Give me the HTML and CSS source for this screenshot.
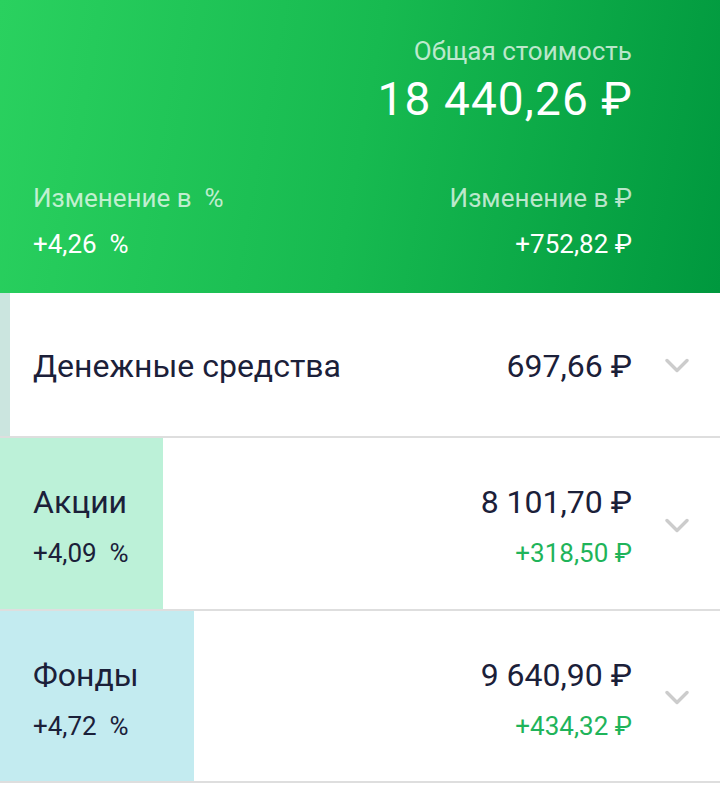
FILE: index.html
```html
<!DOCTYPE html>
<html lang="ru">
<head>
<meta charset="utf-8">
<link rel="stylesheet" href="styles.css">
</head>
<body>
<div class="page">
  <header class="summary">
    <div class="total">
      <div class="label">Общая стоимость</div>
      <div class="total-value">18 440,26 ₽</div>
    </div>
    <div class="changes">
      <div class="change">
        <div class="label">Изменение в &nbsp;%</div>
        <div class="change-value">+4,26 &nbsp;%</div>
      </div>
      <div class="change right">
        <div class="label">Изменение в ₽</div>
        <div class="change-value">+752,82 ₽</div>
      </div>
    </div>
  </header>

  <div class="row row-cash">
    <div class="bar bar-cash" style="width:10px"></div>
    <div class="row-main">
      <div class="name">Денежные средства</div>
    </div>
    <div class="row-values">
      <div class="amount">697,66 ₽</div>
    </div>
    <div class="chevron"><svg width="24" height="16" viewBox="0 0 24 16"><path d="M2 2.5 L12 12.5 L22 2.5" fill="none" stroke="#cccccc" stroke-width="3.4" stroke-linecap="round" stroke-linejoin="round"/></svg></div>
  </div>

  <div class="row row-stocks">
    <div class="bar bar-stocks" style="width:163px"></div>
    <div class="row-main">
      <div class="name">Акции</div>
      <div class="pct">+4,09 &nbsp;%</div>
    </div>
    <div class="row-values">
      <div class="amount">8 101,70 ₽</div>
      <div class="gain">+318,50 ₽</div>
    </div>
    <div class="chevron"><svg width="24" height="16" viewBox="0 0 24 16"><path d="M2 2.5 L12 12.5 L22 2.5" fill="none" stroke="#cccccc" stroke-width="3.4" stroke-linecap="round" stroke-linejoin="round"/></svg></div>
  </div>

  <div class="row row-funds">
    <div class="bar bar-funds" style="width:194px"></div>
    <div class="row-main">
      <div class="name">Фонды</div>
      <div class="pct">+4,72 &nbsp;%</div>
    </div>
    <div class="row-values">
      <div class="amount">9 640,90 ₽</div>
      <div class="gain">+434,32 ₽</div>
    </div>
    <div class="chevron"><svg width="24" height="16" viewBox="0 0 24 16"><path d="M2 2.5 L12 12.5 L22 2.5" fill="none" stroke="#cccccc" stroke-width="3.4" stroke-linecap="round" stroke-linejoin="round"/></svg></div>
  </div>
</div>
</body>
</html>
```
FILE: styles.css
```css
html, body {
  margin: 0;
  padding: 0;
  background: #ffffff;
}
body {
  font-family: Roboto, "Noto Sans", sans-serif;
}
.page {
  width: 720px;
}
.summary {
  height: 293px;
  box-sizing: border-box;
  background: linear-gradient(100deg, #2ad15f 0%, #17ba50 50%, #00983e 100%);
  padding: 36px 88px 0 33px;
  color: #ffffff;
}
.total {
  text-align: right;
}
.label {
  font-size: 26px;
  line-height: 30px;
  color: rgba(255, 255, 255, 0.72);
}
.total-value {
  font-size: 46px;
  line-height: 54px;
  letter-spacing: 1.1px;
  margin-top: 6px;
  margin-right: -1px;
}
.changes {
  display: flex;
  justify-content: space-between;
  margin-top: 57px;
}
.change.right {
  text-align: right;
}
.change-value {
  font-size: 26px;
  line-height: 30px;
  margin-top: 16px;
}
.row {
  position: relative;
  display: flex;
  align-items: center;
  box-sizing: border-box;
  border-bottom: 2px solid #dedede;
  padding: 0 31px 0 33px;
  color: #1b2039;
}
.row-cash {
  height: 145px;
  padding-top: 3px;
}
.row-stocks {
  height: 173px;
  padding-top: 4px;
}
.row-funds {
  height: 172px;
  padding-top: 4px;
}
.bar {
  position: absolute;
  left: 0;
  top: 0;
  bottom: 0;
}
.bar-cash { background: #cbe5df; }
.bar-stocks { background: #bcf1d8; }
.bar-funds { background: #c3ebf0; }
.row-main {
  position: relative;
  flex: 1;
}
.name {
  font-size: 32px;
  line-height: 38px;
}
.pct {
  font-size: 26px;
  line-height: 30px;
  margin-top: 17px;
}
.row-values {
  position: relative;
  text-align: right;
}
.amount {
  font-size: 32px;
  line-height: 38px;
}
.gain {
  font-size: 26px;
  line-height: 30px;
  margin-top: 17px;
  color: #1fb45a;
}
.chevron {
  position: relative;
  width: 24px;
  margin-left: 33px;
  display: flex;
  align-items: center;
}
.chevron svg {
  display: block;
}
```
